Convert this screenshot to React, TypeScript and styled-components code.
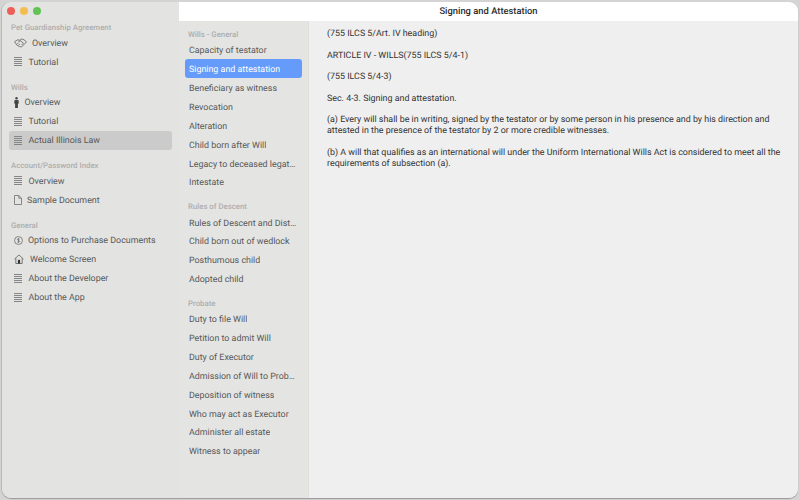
import React from 'react'
import styled, { createGlobalStyle } from 'styled-components'

const GlobalStyle = createGlobalStyle`
  html, body {
    margin: 0;
    width: 800px;
    height: 500px;
    overflow: hidden;
    background: #d4d4d4;
    font-family: Roboto, "Liberation Sans", Arial, sans-serif;
    text-rendering: geometricPrecision;
  }
  * { box-sizing: border-box; }
`

type IconKind = 'lines' | 'hands' | 'person' | 'doc' | 'dollar' | 'home'

interface SideItem {
  label: string
  icon: IconKind
  active?: boolean
}

const iconSlotWidth: Record<IconKind, number> = {
  hands: 23,
  lines: 19.5,
  person: 15.5,
  doc: 18,
  dollar: 19,
  home: 21,
}

const sidebar: { title: string; items: SideItem[] }[] = [
  {
    title: 'Pet Guardianship Agreement',
    items: [
      { label: 'Overview', icon: 'hands' },
      { label: 'Tutorial', icon: 'lines' },
    ],
  },
  {
    title: 'Wills',
    items: [
      { label: 'Overview', icon: 'person' },
      { label: 'Tutorial', icon: 'lines' },
      { label: 'Actual Illinois Law', icon: 'lines', active: true },
    ],
  },
  {
    title: 'Account/Password Index',
    items: [
      { label: 'Overview', icon: 'lines' },
      { label: 'Sample Document', icon: 'doc' },
    ],
  },
  {
    title: 'General',
    items: [
      { label: 'Options to Purchase Documents', icon: 'dollar' },
      { label: 'Welcome Screen', icon: 'home' },
      { label: 'About the Developer', icon: 'lines' },
      { label: 'About the App', icon: 'lines' },
    ],
  },
]

const topics: { title: string; items: string[] }[] = [
  {
    title: 'Wills - General',
    items: [
      'Capacity of testator',
      'Signing and attestation',
      'Beneficiary as witness',
      'Revocation',
      'Alteration',
      'Child born after Will',
      'Legacy to deceased legatee',
      'Intestate',
    ],
  },
  {
    title: 'Rules of Descent',
    items: [
      'Rules of Descent and Distribution',
      'Child born out of wedlock',
      'Posthumous child',
      'Adopted child',
    ],
  },
  {
    title: 'Probate',
    items: [
      'Duty to file Will',
      'Petition to admit Will',
      'Duty of Executor',
      'Admission of Will to Probate',
      'Deposition of witness',
      'Who may act as Executor',
      'Administer all estate',
      'Witness to appear',
    ],
  },
]

const paragraphs = [
  '(755 ILCS 5/Art. IV heading)',
  'ARTICLE IV - WILLS(755 ILCS 5/4-1)',
  '(755 ILCS 5/4-3)',
  'Sec. 4-3. Signing and attestation.',
  '(a) Every will shall be in writing, signed by the testator or by some person in his presence and by his direction and attested in the presence of the testator by 2 or more credible witnesses.',
  '(b) A will that qualifies as an international will under the Uniform International Wills Act is considered to meet all the requirements of subsection (a).',
]

function SideIcon({ kind }: { kind: IconKind }) {
  if (kind === 'lines') {
    return (
      <svg width="8" height="9" viewBox="0 0 8 9" stroke="#858585" strokeWidth="1">
        <path d="M0 .5h8M0 2.5h8M0 4.5h8M0 6.5h8M0 8.5h8" />
      </svg>
    )
  }
  if (kind === 'person') {
    return (
      <svg width="5" height="11" viewBox="0 0 5 11" fill="#444">
        <circle cx="2.5" cy="1.2" r="1.2" />
        <path d="M.6 3h3.8l.5 3.6H3.9V11H1.1V6.6H.1z" />
      </svg>
    )
  }
  if (kind === 'doc') {
    return (
      <svg width="8" height="10" viewBox="0 0 8 10" fill="none" stroke="#707070" strokeWidth=".8">
        <path d="M.5.5h4.3l2.7 2.7v6.3h-7zM4.8.5v2.7h2.7" />
      </svg>
    )
  }
  if (kind === 'dollar') {
    return (
      <svg width="9" height="9" viewBox="0 0 10 10">
        <circle cx="5" cy="5" r="4.4" fill="none" stroke="#707070" strokeWidth=".9" />
        <path d="M6.4 3.7C6 3 4 2.9 3.8 3.9 3.8 5 6.3 4.8 6.3 6c-.1 1.1-2 1-2.6.4M5 2.2v5.6" fill="none" stroke="#606060" strokeWidth=".7" />
      </svg>
    )
  }
  if (kind === 'home') {
    return (
      <svg width="10" height="10" viewBox="0 0 11 11">
        <path d="M.6 5.6 5.5 1l4.9 4.6M2 4.6v5.9h7V4.6" fill="none" stroke="#606060" strokeWidth=".9" />
        <rect x="4.3" y="6.4" width="2.4" height="4.1" fill="#333" />
      </svg>
    )
  }
  // handshake, drawn at the size of the reference
  return (
    <svg width="13" height="10" viewBox="0 0 14 10" fill="none" stroke="#666" strokeWidth=".9" strokeLinejoin="round">
      <path d="M.6 3.6 4 1.6l2.4.4L8.6.6l2.2 1 2.6 2-1.8 2.2-3.4 3.4-2.4-.4-2.8-1.6z" />
      <path d="M4.6 3.8 7 2.6l3.2 2.6-2 2M3.4 6.2l1.4-1.4M5 7.4l1.4-1.4" />
    </svg>
  )
}

export default function App() {
  return (
    <>
      <GlobalStyle />
      <Window>
        <Sidebar>
          <Lights>
            <Light $color="#ee5f57" />
            <Light $color="#f4bd4f" />
            <Light $color="#61c354" />
          </Lights>
          {sidebar.map((section) => (
            <SideSection key={section.title}>
              <SectionTitle>{section.title}</SectionTitle>
              {section.items.map((item) => (
                <SideRow key={item.label + item.icon} $active={item.active}>
                  <IconSlot $width={iconSlotWidth[item.icon]}>
                    <SideIcon kind={item.icon} />
                  </IconSlot>
                  <RowText>{item.label}</RowText>
                </SideRow>
              ))}
            </SideSection>
          ))}
        </Sidebar>
        <Main>
          <TitleBar>Signing and Attestation</TitleBar>
          <Body>
            <TopicList>
              {topics.map((section) => (
                <TopicSection key={section.title}>
                  <TopicTitle>{section.title}</TopicTitle>
                  {section.items.map((item) => (
                    <TopicRow key={item} $active={item === 'Signing and attestation'}>
                      <TopicLabel>{item}</TopicLabel>
                    </TopicRow>
                  ))}
                </TopicSection>
              ))}
            </TopicList>
            <Article>
              {paragraphs.map((text) => (
                <Paragraph key={text}>{text}</Paragraph>
              ))}
            </Article>
          </Body>
        </Main>
      </Window>
    </>
  )
}

const Window = styled.div`
  width: 796px;
  height: 496px;
  margin: 2px;
  display: flex;
  border-radius: 9px;
  overflow: hidden;
  background: #e3e3e1;
  box-shadow: 0 1px 1px #9a9a9a, -1px 0 0 #bcbcbc;
`

const Sidebar = styled.aside`
  width: 177px;
  flex: none;
  background: #e3e3e1;
`

const Lights = styled.div`
  height: 19px;
  padding: 0 0 1px 5px;
  display: flex;
  align-items: center;
  gap: 5px;
`

const Light = styled.span<{ $color: string }>`
  width: 8px;
  height: 8px;
  border-radius: 50%;
  background: ${(p) => p.$color};
`

const SideSection = styled.section`
  margin: 0 7px 9.6px;
`

const SectionTitle = styled.div`
  height: 12px;
  padding-left: 2px;
  font-size: 7.8px;
  font-weight: 500;
  line-height: 14px;
  color: #aeaeae;
`

const SideRow = styled.div<{ $active?: boolean }>`
  height: 19px;
  display: flex;
  align-items: center;
  font-size: 8.9px;
  color: #585858;
  border-radius: 3px;
  background: ${(p) => (p.$active ? '#cbcbcb' : 'transparent')};
`

const RowText = styled.span`
  padding-top: 2px;
`

const IconSlot = styled.span<{ $width: number }>`
  display: flex;
  align-items: center;
  flex: none;
  width: ${(p) => p.$width}px;
  padding-left: 5px;
`

const Main = styled.main`
  flex: 1;
  min-width: 0;
  display: flex;
  flex-direction: column;
`

const TitleBar = styled.header`
  height: 19px;
  flex: none;
  padding-bottom: 1px;
  display: flex;
  align-items: center;
  justify-content: center;
  background: #fff;
  font-size: 9.4px;
  font-weight: 500;
  color: #2c2c2c;
`

const Body = styled.div`
  flex: 1;
  min-height: 0;
  display: flex;
`

const TopicList = styled.nav`
  width: 130px;
  flex: none;
  padding: 7px 6px 0;
  background: #e4e4e2;
  border-right: 1px solid #e0e0de;
`

const TopicSection = styled.section`
  margin-bottom: 9.3px;
`

const TopicTitle = styled.div`
  height: 12px;
  padding-left: 3px;
  font-size: 7.8px;
  font-weight: 500;
  line-height: 14px;
  color: #aeaeae;
`

const TopicRow = styled.div<{ $active?: boolean }>`
  height: 18.87px;
  display: flex;
  align-items: center;
  padding: 4px 4px 0;
  border-radius: 3px;
  font-size: 8.9px;
  color: ${(p) => (p.$active ? '#fff' : '#585858')};
  background: ${(p) => (p.$active ? '#659cfb' : 'transparent')};
`

const TopicLabel = styled.span`
  overflow: hidden;
  white-space: nowrap;
  text-overflow: ellipsis;
`

const Article = styled.article`
  flex: 1;
  min-width: 0;
  padding: 8px 14px 0 18px;
  background: #efefef;
`

const Paragraph = styled.p`
  margin: 0 0 10.8px;
  font-size: 8.9px;
  line-height: 10.8px;
  color: #333;
`
